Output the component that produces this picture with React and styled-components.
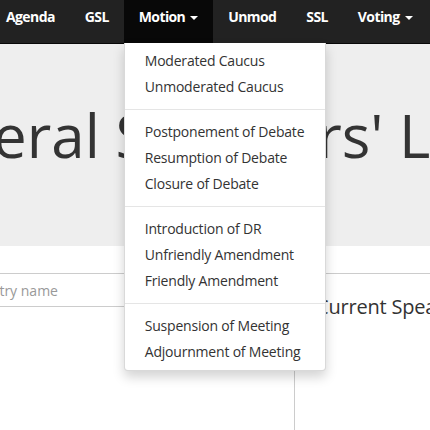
import React from 'react'
import styled, { createGlobalStyle } from 'styled-components'

const GlobalStyle = createGlobalStyle`
  html, body {
    margin: 0;
    padding: 0;
    background: #fff;
  }
  body {
    font-family: "Open Sans", "Noto Sans", "DejaVu Sans", sans-serif;
    font-size: 14px;
    color: #333;
  }
  * {
    box-sizing: border-box;
  }
`

const motionItems = [
  ['Moderated Caucus', 'Unmoderated Caucus'],
  ['Postponement of Debate', 'Resumption of Debate', 'Closure of Debate'],
  ['Introduction of DR', 'Unfriendly Amendment', 'Friendly Amendment'],
  ['Suspension of Meeting', 'Adjournment of Meeting'],
]

function App() {
  return (
    <Page>
      <GlobalStyle />
      <Navbar>
        <NavList>
          <NavItem>Agenda</NavItem>
          <NavItem>GSL</NavItem>
          <NavItem active>
            Motion <Caret />
            <Dropdown>
              {motionItems.map((group, i) => (
                <React.Fragment key={i}>
                  {i > 0 && <Divider />}
                  {group.map(label => (
                    <DropdownItem key={label}>{label}</DropdownItem>
                  ))}
                </React.Fragment>
              ))}
            </Dropdown>
          </NavItem>
          <NavItem>Unmod</NavItem>
          <NavItem>SSL</NavItem>
          <NavItem>
            Voting <Caret />
          </NavItem>
        </NavList>
      </Navbar>

      <Jumbotron>
        <Title>General Speakers' List</Title>
      </Jumbotron>

      <Columns>
        <LeftColumn>
          <CountryInput type="text" placeholder="Country name" />
        </LeftColumn>
        <RightColumn>
          <Heading>Current Speaker</Heading>
        </RightColumn>
      </Columns>
    </Page>
  )
}

const Page = styled.div`
  width: 430px;
  height: 430px;
  overflow: hidden;
  position: relative;
`

const Navbar = styled.nav`
  height: 44px;
  background: #222;
  border-bottom: 1px solid #080808;
  position: relative;
  z-index: 10;
`

const NavList = styled.div`
  display: flex;
  margin-left: -9px;
`

const NavItem = styled.div`
  position: relative;
  height: 43px;
  padding: 7px 15px 0;
  line-height: 20px;
  font-size: 14px;
  font-weight: 700;
  letter-spacing: -0.6px;
  color: #fff;
  white-space: nowrap;
  background: ${p => (p.active ? '#080808' : 'transparent')};
`

const Caret = styled.span`
  display: inline-block;
  width: 0;
  height: 0;
  margin-left: 2px;
  vertical-align: middle;
  border-top: 4px solid #fff;
  border-left: 4px solid transparent;
  border-right: 4px solid transparent;
`

const Dropdown = styled.div`
  position: absolute;
  top: 100%;
  left: 0;
  width: 202px;
  padding: 5px 0;
  background: #fff;
  border: 1px solid rgba(0, 0, 0, 0.15);
  border-top: 0;
  border-radius: 0 0 4px 4px;
  box-shadow: 0 6px 12px rgba(0, 0, 0, 0.175);
  font-weight: 400;
  letter-spacing: 0;
`

const DropdownItem = styled.div`
  padding: 3px 20px;
  line-height: 20px;
  font-size: 14px;
  letter-spacing: -0.2px;
  color: #333;
  white-space: nowrap;
`

const Divider = styled.div`
  height: 1px;
  margin: 9px 0;
  background: #e5e5e5;
`

const Jumbotron = styled.div`
  height: 202px;
  background: #eee;
  overflow: hidden;
`

const Title = styled.h1`
  margin: 0 0 0 -121px;
  padding-top: 58px;
  font-size: 60px;
  font-weight: 400;
  line-height: 66px;
  color: #333;
  white-space: nowrap;
`

const Columns = styled.div`
  display: grid;
  grid-template-columns: 294px 1fr;
  margin-top: 27px;
  border-top: 1px solid #ccc;
  height: 157px;
`

const LeftColumn = styled.div`
  overflow: hidden;
`

const CountryInput = styled.input`
  display: block;
  width: calc(100% + 47px);
  height: 33px;
  margin-left: -47px;
  padding: 0 12px;
  border: 0;
  border-bottom: 1px solid #ccc;
  font-family: inherit;
  font-size: 14px;
  color: #555;
  outline: none;

  &::placeholder {
    color: #999;
  }
`

const RightColumn = styled.div`
  border-left: 1px solid #ccc;
  padding: 21px 0 0 21px;
`

const Heading = styled.h3`
  margin: 0;
  font-size: 20px;
  font-weight: 400;
  line-height: 24px;
  letter-spacing: -0.2px;
  color: #333;
  white-space: nowrap;
`

export default App
